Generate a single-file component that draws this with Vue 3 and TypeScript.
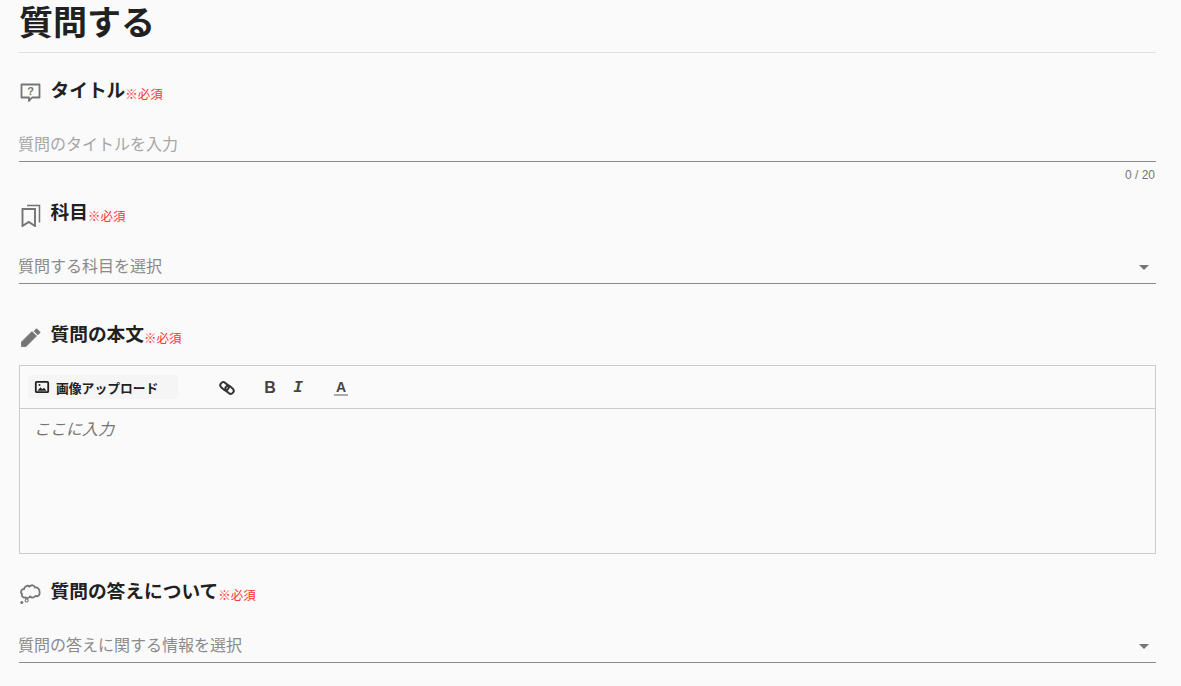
<script setup lang="ts">
const tools = ['link', 'bold', 'italic', 'color']
</script>

<template>
  <div class="page">
    <h1 class="page-title">質問する</h1>

    <section class="field field-title">
      <div class="label-row">
        <svg class="label-icon" viewBox="0 0 24 24" width="24" height="24">
          <path d="M3.500 3.500h18v13H14l-3 3.500v-3.500H3.500z" fill="none" stroke="#757575" stroke-width="1.800" stroke-linejoin="round" />
          <text x="12.500" y="14" text-anchor="middle" class="q-mark">?</text>
        </svg>
        <span class="label-text">タイトル</span><span class="required">※必須</span>
      </div>
      <div class="input-line">
        <span class="placeholder light">質問のタイトルを入力</span>
      </div>
      <div class="counter">0 / 20</div>
    </section>

    <section class="field field-subject">
      <div class="label-row">
        <svg class="label-icon" viewBox="0 0 24 24" width="24" height="24">
          <path d="M4.500 6h12.500v17l-6.250-4-6.250 4z" fill="none" stroke="#757575" stroke-width="1.900" />
          <path d="M9 2.500h12.500v17" fill="none" stroke="#757575" stroke-width="1.500" />
        </svg>
        <span class="label-text">科目</span><span class="required">※必須</span>
      </div>
      <div class="input-line">
        <span class="placeholder">質問する科目を選択</span>
        <i class="arrow"></i>
      </div>
    </section>

    <section class="field field-body">
      <div class="label-row">
        <svg class="label-icon" viewBox="0 0 24 24" width="24" height="24">
          <path fill="#757575" stroke="#757575" stroke-width="0.800" d="M3.500 17V21.500h4.500L18.500 11l-4.500-4.500L3.500 17zM21.700 8.040a1 1 0 0 0 0-1.410l-2.340-2.340a1 1 0 0 0-1.410 0l-1.830 1.830 3.750 3.750 1.830-1.830z" />
        </svg>
        <span class="label-text">質問の本文</span><span class="required">※必須</span>
      </div>
      <div class="editor">
        <div class="toolbar">
          <button class="upload" type="button">
            <svg viewBox="0 0 16 16" width="16" height="16">
              <rect x="1.800" y="2.800" width="12.400" height="10.400" rx="1" fill="none" stroke="#222" stroke-width="1.800" />
              <path d="M3.500 11.800l3-3.500 1.800 2 1.700-1.500 2.500 3z" fill="#222" />
              <circle cx="5.500" cy="6" r="1" fill="#222" />
            </svg>
            画像アップロード
          </button>
          <div class="tool-icons">
            <svg v-if="tools.includes('link')" class="tool link" viewBox="0 0 16 16" width="16" height="16">
              <g fill="none" stroke="#333" stroke-width="2">
                <rect x="1" y="3.200" width="9" height="6" rx="3" transform="rotate(40 5.500 6.200)" />
                <rect x="6" y="6.800" width="9" height="6" rx="3" transform="rotate(40 10.500 9.800)" />
              </g>
            </svg>
            <span class="tool bold">B</span>
            <span class="tool italic">I</span>
            <span class="tool color">A</span>
          </div>
        </div>
        <div class="editor-body">ここに入力</div>
      </div>
    </section>

    <section class="field field-answer">
      <div class="label-row">
        <svg class="label-icon" viewBox="0 0 24 24" width="24" height="24">
          <path d="M7.500 15.500c-2.500.5-4.500-1.500-3.500-3.500-2-1.500-1-5 2-5 .5-3 4-4 5.500-2.500 2-2 5-1.500 5.500 1 2.500-.5 5 2 4.500 4.500 1 2.500-1.500 5-4 4-1.500 2-4 2-5.500.5-1.500 2-3.500 2-4.500 1z" fill="none" stroke="#757575" stroke-width="1.800" />
          <circle cx="8.700" cy="18.500" r="1.500" fill="none" stroke="#757575" stroke-width="1.100" />
          <circle cx="3.800" cy="20.500" r="1.500" fill="#757575" />
        </svg>
        <span class="label-text">質問の答えについて</span><span class="required">※必須</span>
      </div>
      <div class="input-line">
        <span class="placeholder">質問の答えに関する情報を選択</span>
        <i class="arrow"></i>
      </div>
    </section>
  </div>
</template>

<style>
html,
body {
  margin: 0;
  background: #fafafa;
  overflow: hidden;
}
</style>

<style scoped>
.page {
  width: 1137px;
  height: 686px;
  margin-left: 19px;
  overflow: hidden;
  font-family: "Liberation Sans", "Noto Sans CJK JP", sans-serif;
  color: #212121;
}

.page-title {
  margin: 0;
  height: 52px;
  border-bottom: 1px solid #e0e0e0;
  font-size: 34px;
  font-weight: 700;
  line-height: 46px;
}

.field-title {
  padding-top: 25px;
}

.field-subject {
  padding-top: 18px;
}

.field-body {
  padding-top: 38px;
}

.field-answer {
  padding-top: 25px;
}

.label-row {
  display: flex;
  align-items: flex-end;
  height: 26px;
}

.label-icon {
  flex: none;
  width: 24px;
  height: 24px;
  margin: 0 8.500px 0 -1px;
  align-self: center;
  position: relative;
  top: 2px;
}

.q-mark {
  font-size: 11px;
  font-weight: 700;
  fill: #757575;
  font-family: "Liberation Sans", sans-serif;
}

.label-text {
  font-size: 18.72px;
  font-weight: 700;
  line-height: 26px;
}

.required {
  font-size: 12.5px;
  line-height: 18px;
  color: #f33;
}

.input-line {
  display: flex;
  align-items: center;
  justify-content: space-between;
  height: 37px;
  margin-top: 20px;
  border-bottom: 1px solid #8c8c8c;
  font-size: 16px;
}

.placeholder {
  margin-left: -1px;
  color: #8a8a8a;
}

.placeholder.light {
  color: #a6a6a6;
}

.arrow {
  width: 0;
  height: 0;
  margin: 5px 7px 0 0;
  border-left: 5px solid transparent;
  border-right: 5px solid transparent;
  border-top: 5px solid #757575;
}

.counter {
  height: 20px;
  padding-right: 1px;
  font-size: 12px;
  line-height: 26px;
  text-align: right;
  color: #757575;
}

.editor {
  height: 189px;
  margin-top: 17px;
  box-sizing: border-box;
  border: 1px solid #ccc;
}

.toolbar {
  display: flex;
  align-items: center;
  height: 42px;
  padding-left: 8px;
  border-bottom: 1px solid #ccc;
}

.upload {
  display: flex;
  align-items: center;
  gap: 6px;
  width: 150px;
  height: 24px;
  padding: 0 0 0 6px;
  border: 0;
  border-radius: 4px;
  background: #f5f5f5;
  color: #222;
  font-family: inherit;
  font-size: 12.8px;
  font-weight: 700;
}

.tool-icons {
  display: flex;
  align-items: center;
  margin-left: 41px;
  padding-top: 1px;
}

.tool {
  flex: none;
  width: 14px;
  font-size: 16px;
  line-height: 16px;
  color: #444;
  text-align: center;
}

.link {
  width: 16px;
  margin-right: 28px;
}

.bold {
  margin-right: 14px;
  font-weight: 700;
}

.italic {
  margin-right: 29px;
  font-family: "Liberation Mono", monospace;
  font-style: italic;
  font-weight: 700;
}

.color {
  font-size: 14px;
  font-weight: 700;
  line-height: 14px;
  border-bottom: 2px solid #aaa;
}

.editor-body {
  padding: 11px 14px;
  font-size: 16px;
  font-style: italic;
  line-height: 20px;
  color: #757575;
}
</style>
